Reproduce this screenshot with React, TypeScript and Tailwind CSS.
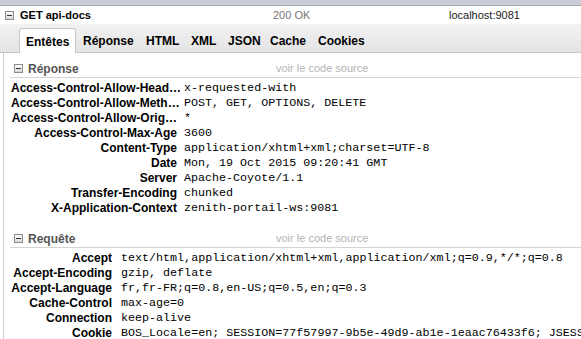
import React from "react";

const Minus = () => (
  <svg width="9" height="9" viewBox="0 0 9 9" className="shrink-0">
    <defs>
      <linearGradient id="g" x1="0" y1="0" x2="0" y2="1">
        <stop offset="0" stopColor="#ffffff" />
        <stop offset="1" stopColor="#d6d6d6" />
      </linearGradient>
    </defs>
    <rect x="0.5" y="0.5" width="8" height="8" fill="url(#g)" stroke="#8c8c8c" />
    <rect x="2" y="4" width="5" height="1" fill="#333" />
  </svg>
);

const tabs: [string, string][] = [
  ["Entêtes", "w-[57px]"],
  ["Réponse", "w-[63px]"],
  ["HTML", "w-[45px]"],
  ["XML", "w-[37px]"],
  ["JSON", "w-[42px]"],
  ["Cache", "w-[48px]"],
  ["Cookies", "w-[60px]"],
];

const response: [string, string][] = [
  ["Access-Control-Allow-Head…", "x-requested-with"],
  ["Access-Control-Allow-Meth…", "POST, GET, OPTIONS, DELETE"],
  ["Access-Control-Allow-Orig…", "*"],
  ["Access-Control-Max-Age", "3600"],
  ["Content-Type", "application/xhtml+xml;charset=UTF-8"],
  ["Date", "Mon, 19 Oct 2015 09:20:41 GMT"],
  ["Server", "Apache-Coyote/1.1"],
  ["Transfer-Encoding", "chunked"],
  ["X-Application-Context", "zenith-portail-ws:9081"],
];

const request: [string, string][] = [
  ["Accept", "text/html,application/xhtml+xml,application/xml;q=0.9,*/*;q=0.8"],
  ["Accept-Encoding", "gzip, deflate"],
  ["Accept-Language", "fr,fr-FR;q=0.8,en-US;q=0.5,en;q=0.3"],
  ["Cache-Control", "max-age=0"],
  ["Connection", "keep-alive"],
  ["Cookie", "BOS_Locale=en; SESSION=77f57997-9b5e-49d9-ab1e-1eaac76433f6; JSESSIONID"],
];

const Section = ({
  title,
  rows,
  mt,
  labelW,
  gap,
}: {
  title: string;
  rows: [string, string][];
  mt: string;
  labelW: string;
  gap: string;
}) => (
  <div className={`ml-[6px] ${mt}`}>
    <div className="h-[18px] border-b border-[#d4d4d4] flex items-center pl-[4px]">
      <Minus />
      <span className="ml-[5px] w-[248px] text-[12px] font-bold text-[#555]">{title}</span>
      <span className="text-[11px] text-[#b4b4b4]">voir le code source</span>
    </div>
    <div className="mt-[3px]">
      {rows.map(([k, v]) => (
        <div key={k} className="flex h-[15px] leading-[15px] whitespace-nowrap">
          <div className={`ml-[1px] ${labelW} shrink-0 text-right text-[12px] font-bold text-black`}>
            {k}
          </div>
          <div className={`${gap} text-[11.7px] text-black [font-family:'Liberation_Mono',monospace]`}>
            {v}
          </div>
        </div>
      ))}
    </div>
  </div>
);

export default function App() {
  return (
    <div className="w-[581px] h-[339px] overflow-hidden bg-white [font-family:'Liberation_Sans',Arial,sans-serif] text-black">
      <div className="h-[6px] bg-[#c9cdd7] border-b border-[#a6aab4]" />
      <div className="h-[18px] flex items-center text-[11px] whitespace-nowrap">
        <div className="ml-[5px]">
          <Minus />
        </div>
        <span className="ml-[6px] w-[253px] font-bold">GET api-docs</span>
        <span className="w-[176px] text-[#777]">200 OK</span>
        <span className="text-[#222]">localhost:9081</span>
      </div>
      <div className="h-[29px] bg-gradient-to-b from-[#f2f2f2] to-[#e4e4e4] border-b border-[#c6c6c6] flex items-end pl-[19px]">
        {tabs.map(([t, w], i) => (
          <div
            key={t}
            className={
              i === 0
                ? `${w} h-[25px] -mb-px bg-white border border-b-0 border-[#c6c6c6] rounded-t-[3px] pl-[6px] pt-[4px] text-[12px] font-bold`
                : `${w} h-[25px] pl-[7px] pt-[5px] text-[12px] font-bold`
            }
          >
            {t}
          </div>
        ))}
      </div>
      <div className="ml-[3px] border-l border-[#cfcfcf] h-[300px] pt-[7px]">
        <Section title="Réponse" rows={response} mt="mt-0" labelW="w-[166px]" gap="ml-[7px]" />
        <Section title="Requête" rows={request} mt="mt-[14px]" labelW="w-[101px]" gap="ml-[9px]" />
      </div>
    </div>
  );
}
